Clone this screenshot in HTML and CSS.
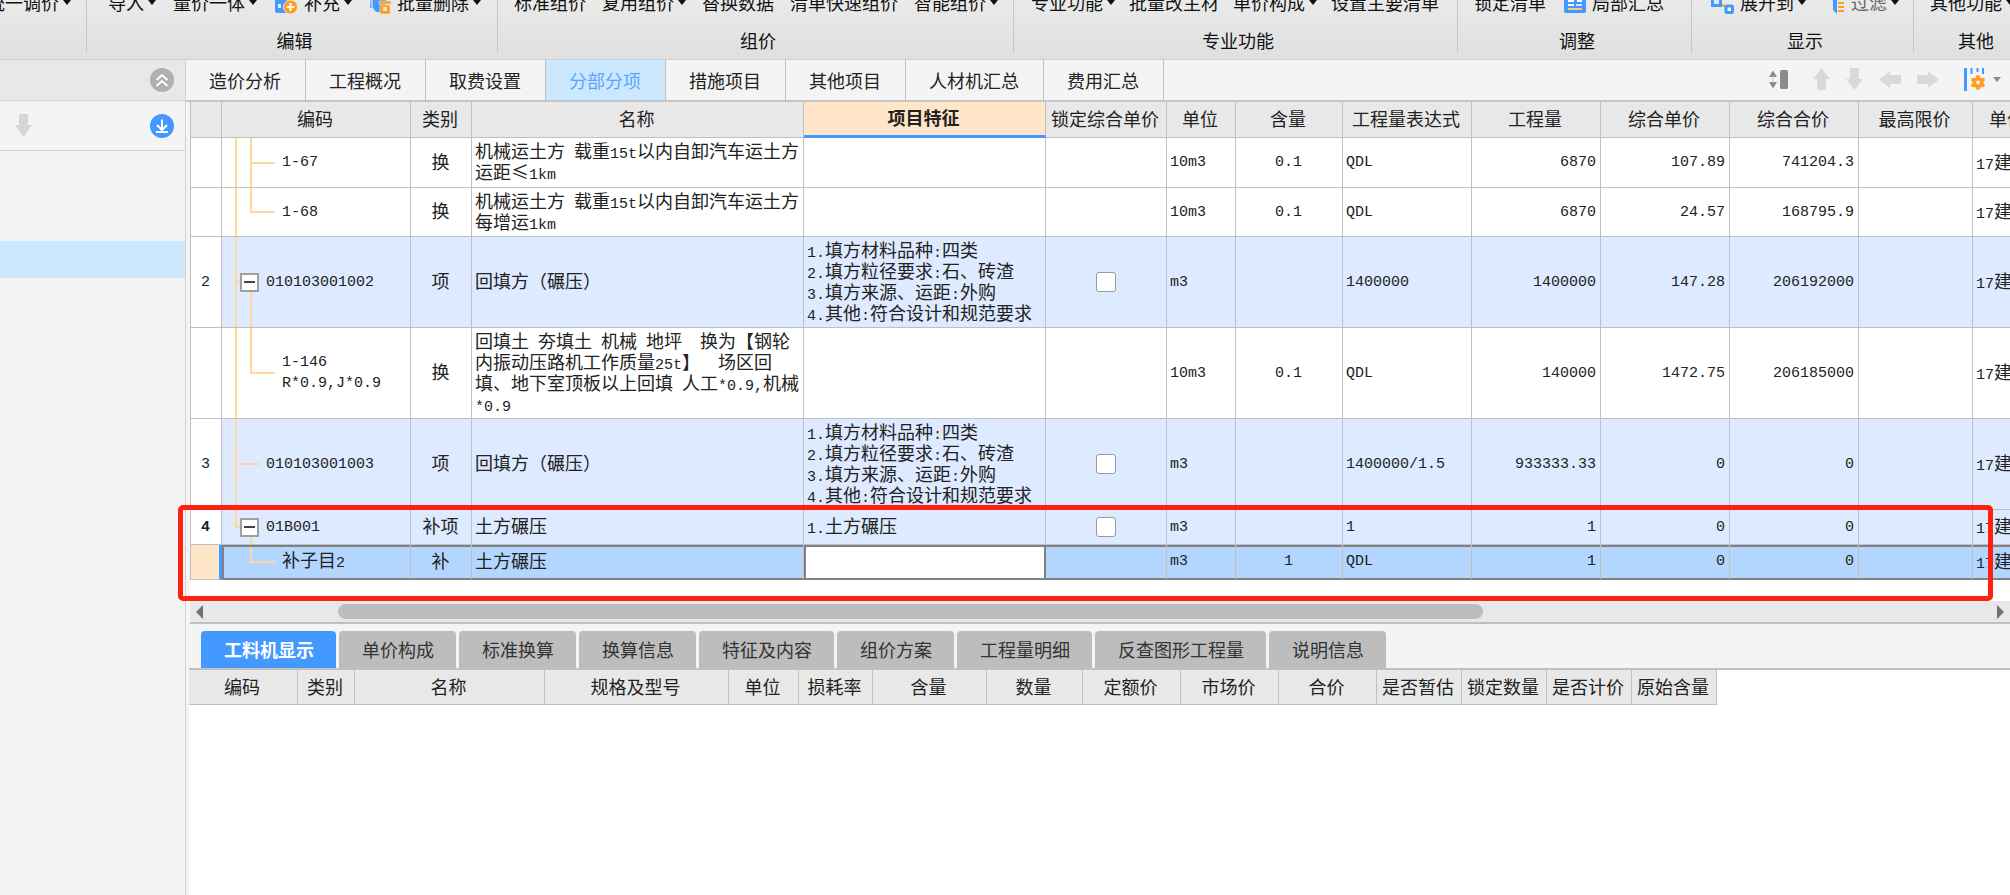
FILE: index.html
```html
<!DOCTYPE html>
<html lang="zh-CN">
<head>
<meta charset="utf-8">
<title>分部分项</title>
<link rel="stylesheet" href="styles.css">
</head>
<body>
<div class="app">
  <header class="ribbon">
    <section class="group g-price">
      <div class="tools"><button type="button" class="tool drop">统一调价</button></div>
      <div class="label"></div>
    </section>
    <section class="group g-edit">
      <div class="tools">
        <button type="button" class="tool drop">导入</button>
        <button type="button" class="tool drop">量价一体</button>
        <button type="button" class="tool drop"><svg width="24" height="24" viewBox="0 0 24 24"><rect x="1" y="0" width="17" height="23" rx="2" fill="#4399ff"/><path d="M4 5h4v4H4zM11 5h4v4h-4zM4 14h3v4H4z" fill="#e6f1ff"/><circle cx="16.500" cy="17" r="7" fill="#ff9c1c" stroke="#e5e5e5"/><path d="M16.500 13v8M12.500 17h8" stroke="#fff" stroke-width="2"/></svg>补充</button>
        <button type="button" class="tool drop"><svg width="22" height="24" viewBox="0 0 22 24"><path d="M1 2h16v20H7l-3-4H1z" fill="#4399ff"/><path d="M0 2h4v16H2z" fill="#9dcaff"/><path d="M10 11h12v3H10zM11 15h10v9H11z" fill="#ff9c1c" stroke="#e5e5e5" stroke-width=".6"/><path d="M14 17h4v4h-4z" fill="#ffe3bd"/></svg>批量删除</button>
      </div>
      <div class="label">编辑</div>
    </section>
    <section class="group g-compose">
      <div class="tools">
        <button type="button" class="tool">标准组价</button>
        <button type="button" class="tool drop">复用组价</button>
        <button type="button" class="tool">替换数据</button>
        <button type="button" class="tool">清单快速组价</button>
        <button type="button" class="tool drop">智能组价</button>
      </div>
      <div class="label">组价</div>
    </section>
    <section class="group g-pro">
      <div class="tools">
        <button type="button" class="tool drop">专业功能</button>
        <button type="button" class="tool">批量改主材</button>
        <button type="button" class="tool drop">单价构成</button>
        <button type="button" class="tool">设置主要清单</button>
      </div>
      <div class="label">专业功能</div>
    </section>
    <section class="group g-adjust">
      <div class="tools">
        <button type="button" class="tool">锁定清单</button>
        <button type="button" class="tool"><svg width="22" height="24" viewBox="0 0 22 24"><rect x="0" y="0" width="22" height="23" rx="2" fill="#4399ff"/><path d="M4 11h6M13 11h5M4 15h6" stroke="#fff" stroke-width="2"/><path d="M4 19h14" stroke="#ffc680" stroke-width="2"/><path d="M12 15h6" stroke="#fff" stroke-width="1.500"/></svg>局部汇总</button>
      </div>
      <div class="label">调整</div>
    </section>
    <section class="group g-show">
      <div class="tools">
        <button type="button" class="tool drop"><svg width="24" height="24" viewBox="0 0 24 24"><path d="M2.500 6.500h8v9h-8z" fill="#dcebff" stroke="#4399ff" stroke-width="3"/><path d="M12 14.500l3 2" stroke="#ff9c1c" stroke-width="2"/><rect x="16" y="16" width="6.500" height="6.500" rx="1" fill="#fff" stroke="#4399ff" stroke-width="3"/></svg>展开到</button>
        <button type="button" class="tool drop muted"><svg width="15" height="24" viewBox="0 0 15 24"><path d="M0 6h7v18l-4-4v-9z" fill="#4399ff"/><path d="M8 9h6M8 13h6M8 17h6M8 21h6" stroke="#ff9c1c" stroke-width="2"/></svg>过滤</button>
      </div>
      <div class="label">显示</div>
    </section>
    <section class="group g-other">
      <div class="tools"><button type="button" class="tool drop">其他功能</button></div>
      <div class="label">其他</div>
    </section>
  </header>

  <div class="body">
    <aside class="side">
      <div class="side-head">
        <button type="button" class="round grey" aria-label="收起"><svg width="24" height="24" viewBox="0 0 24 24" fill="none" stroke="#fff" stroke-width="2"><path d="M6.500 12l5.500-5 5.500 5M6.500 18l5.500-5 5.500 5"/></svg></button>
      </div>
      <div class="side-tools">
        <button type="button" class="plain" aria-label="下移"><svg width="17" height="23" viewBox="0 0 17 23"><path d="M4 0h9v11h4L8.500 23 0 11h4z" fill="#d6d6d6"/></svg></button>
        <button type="button" class="round blue" aria-label="导入"><svg width="24" height="24" viewBox="0 0 24 24" fill="none" stroke="#fff" stroke-width="2"><path d="M12 5.500v10M7 11l5 5 5-5M6 18h12"/></svg></button>
      </div>
      <div class="side-list"><div class="side-item"></div></div>
    </aside>

    <main class="main">
      <div class="tabbar">
        <nav class="tabs">
          <button type="button" class="tab">造价分析</button><button type="button" class="tab">工程概况</button><button type="button" class="tab">取费设置</button><button type="button" class="tab on">分部分项</button><button type="button" class="tab">措施项目</button><button type="button" class="tab">其他项目</button><button type="button" class="tab">人材机汇总</button><button type="button" class="tab">费用汇总</button>
        </nav>
        <div class="actions">
          <button type="button" class="plain" aria-label="行高"><svg width="19" height="19" viewBox="0 0 19 19"><path d="M0 7l4-6.500L8 7zM0 12l4 6.500L8 12z" fill="#8a8a8a"/><path d="M4 6v7" stroke="#c4c4c4"/><rect x="11" y="0" width="8" height="19" rx="1.500" fill="#8a8a8a"/></svg></button>
          <div class="arrows">
            <button type="button" class="plain" aria-label="上移"><svg width="17" height="22" viewBox="0 0 17 22"><path d="M4 22h9V11h4L8.500 0 0 11h4z" fill="#d9d9d9"/></svg></button>
            <button type="button" class="plain" aria-label="下移"><svg width="17" height="22" viewBox="0 0 17 22"><path d="M4 0h9v11h4L8.500 22 0 11h4z" fill="#d9d9d9"/></svg></button>
            <button type="button" class="plain" aria-label="升级"><svg width="22" height="17" viewBox="0 0 22 17"><path d="M22 4v9H11v4L0 8.500 11 0v4z" fill="#d9d9d9"/></svg></button>
            <button type="button" class="plain" aria-label="降级"><svg width="22" height="17" viewBox="0 0 22 17"><path d="M0 4v9h11v4l11-8.500L11 0v4z" fill="#d9d9d9"/></svg></button>
          </div>
          <button type="button" class="plain setting" aria-label="列设置"><svg width="21" height="23" viewBox="0 0 21 23"><path d="M1.500 0v23" stroke="#4399ff" stroke-width="3"/><path d="M7.500 0v6M13.500 0v4M19 0v6" stroke="#4399ff" stroke-width="2"/><g fill="#ff9c1c"><circle cx="14" cy="14.500" r="5.500"/><circle cx="14" cy="9" r="2"/><circle cx="14" cy="20" r="2"/><circle cx="9.200" cy="11.700" r="2"/><circle cx="18.800" cy="11.700" r="2"/><circle cx="9.200" cy="17.300" r="2"/><circle cx="18.800" cy="17.300" r="2"/></g><circle cx="14" cy="14.500" r="2" fill="#f4f4f4"/></svg><svg width="8" height="5" viewBox="0 0 8 5"><path d="M0 0h8L4 5z" fill="#8a8a8a"/></svg></button>
        </div>
      </div>

      <div class="grid-pane">
        <div class="grid-view">
          <table class="grid">
            <colgroup><col class="w32"><col class="w189"><col class="w61"><col class="w332"><col class="w242"><col class="w121"><col class="w69"><col class="w107"><col class="w129"><col class="w129"><col class="w129"><col class="w129"><col class="w114"><col class="w142"></colgroup>
            <thead>
              <tr><th></th><th>编码</th><th>类别</th><th>名称</th><th class="current">项目特征</th><th>锁定综合单价</th><th>单位</th><th>含量</th><th>工程量表达式</th><th>工程量</th><th>综合单价</th><th>综合合价</th><th>最高限价</th><th class="edge">单价</th></tr>
            </thead>
            <tbody>
              <tr class="h50"><td class="no"></td><td class="code sub t-mid">1-67</td><td class="kind">换</td><td>机械运土方<span class="n"> </span>载重<span class="n">15t</span>以内自卸汽车运土方<br>运距≤<span class="n">1km</span></td><td></td><td></td><td class="txt">10m3</td><td class="mid">0.1</td><td class="txt">QDL</td><td class="num">6870</td><td class="num">107.89</td><td class="num">741204.3</td><td></td><td><span class="n">17</span>建</td></tr>
              <tr class="h49"><td class="no"></td><td class="code sub t-end">1-68</td><td class="kind">换</td><td>机械运土方<span class="n"> </span>载重<span class="n">15t</span>以内自卸汽车运土方<br>每增运<span class="n">1km</span></td><td></td><td></td><td class="txt">10m3</td><td class="mid">0.1</td><td class="txt">QDL</td><td class="num">6870</td><td class="num">24.57</td><td class="num">168795.9</td><td></td><td><span class="n">17</span>建</td></tr>
              <tr class="h91 item"><td class="no">2</td><td class="code t-parent"><div class="node"><button type="button" class="fold" aria-label="折叠"></button>010103001002</div></td><td class="kind">项</td><td>回填方（碾压）</td><td><span class="n">1.</span>填方材料品种<span class="n">:</span>四类<br><span class="n">2.</span>填方粒径要求<span class="n">:</span>石、砖渣<br><span class="n">3.</span>填方来源、运距<span class="n">:</span>外购<br><span class="n">4.</span>其他<span class="n">:</span>符合设计和规范要求</td><td class="check"><input type="checkbox" aria-label="锁定综合单价"></td><td class="txt">m3</td><td></td><td class="txt">1400000</td><td class="num">1400000</td><td class="num">147.28</td><td class="num">206192000</td><td></td><td><span class="n">17</span>建</td></tr>
              <tr class="h91"><td class="no"></td><td class="code sub t-end">1-146<br>R*0.9,J*0.9</td><td class="kind">换</td><td>回填土<span class="n"> </span>夯填土<span class="n"> </span>机械<span class="n"> </span>地坪<span class="n">&nbsp; </span>换为【钢轮<br>内振动压路机工作质量<span class="n">25t</span>】<span class="n">&nbsp; </span>场区回<br>填、地下室顶板以上回填<span class="n"> </span>人工<span class="n">*0.9,</span>机械<br><span class="n">*0.9</span></td><td></td><td></td><td class="txt">10m3</td><td class="mid">0.1</td><td class="txt">QDL</td><td class="num">140000</td><td class="num">1472.75</td><td class="num">206185000</td><td></td><td><span class="n">17</span>建</td></tr>
              <tr class="h91 item"><td class="no">3</td><td class="code t-leaf">010103001003</td><td class="kind">项</td><td>回填方（碾压）</td><td><span class="n">1.</span>填方材料品种<span class="n">:</span>四类<br><span class="n">2.</span>填方粒径要求<span class="n">:</span>石、砖渣<br><span class="n">3.</span>填方来源、运距<span class="n">:</span>外购<br><span class="n">4.</span>其他<span class="n">:</span>符合设计和规范要求</td><td class="check"><input type="checkbox" aria-label="锁定综合单价"></td><td class="txt">m3</td><td></td><td class="txt">1400000/1.5</td><td class="num">933333.33</td><td class="num">0</td><td class="num">0</td><td></td><td><span class="n">17</span>建</td></tr>
              <tr class="h35 item"><td class="no strong">4</td><td class="code t-last"><div class="node"><button type="button" class="fold" aria-label="折叠"></button>01B001</div></td><td class="kind">补项</td><td>土方碾压</td><td><span class="n">1.</span>土方碾压</td><td class="check"><input type="checkbox" aria-label="锁定综合单价"></td><td class="txt">m3</td><td></td><td class="txt">1</td><td class="num">1</td><td class="num">0</td><td class="num">0</td><td></td><td><span class="n">17</span>建</td></tr>
              <tr class="h35 picked"><td class="no"></td><td class="code sub t-child"><span class="cjk">补子目</span>2</td><td class="kind">补</td><td>土方碾压</td><td class="editing"><input type="text" aria-label="项目特征"></td><td></td><td class="txt">m3</td><td class="mid">1</td><td class="txt">QDL</td><td class="num">1</td><td class="num">0</td><td class="num">0</td><td></td><td><span class="n">17</span>建</td></tr>
            </tbody>
          </table>
        </div>
        <div class="hscroll">
          <svg width="7" height="14" viewBox="0 0 7 14"><path d="M7 0v14L0 7z" fill="#707078"/></svg>
          <div class="track"><div class="thumb"></div></div>
          <svg width="7" height="14" viewBox="0 0 7 14"><path d="M0 0v14l7-7z" fill="#707078"/></svg>
        </div>
        <div class="mark"></div>
      </div>

      <div class="subtabs">
        <button type="button" class="subtab on">工料机显示</button><button type="button" class="subtab">单价构成</button><button type="button" class="subtab">标准换算</button><button type="button" class="subtab">换算信息</button><button type="button" class="subtab">特征及内容</button><button type="button" class="subtab">组价方案</button><button type="button" class="subtab">工程量明细</button><button type="button" class="subtab">反查图形工程量</button><button type="button" class="subtab">说明信息</button>
      </div>
      <div class="detail">
        <table class="parts">
          <colgroup><col class="w109"><col class="w57"><col class="w190"><col class="w184"><col class="w70"><col class="w74"><col class="w114"><col class="w96"><col class="w98"><col class="w98"><col class="w98"><col class="w85"><col class="w85"><col class="w85"><col class="w85"></colgroup>
          <thead><tr><th>编码</th><th>类别</th><th>名称</th><th>规格及型号</th><th>单位</th><th>损耗率</th><th>含量</th><th>数量</th><th>定额价</th><th>市场价</th><th>合价</th><th>是否暂估</th><th>锁定数量</th><th>是否计价</th><th>原始含量</th></tr></thead>
        </table>
      </div>
    </main>
  </div>
</div>
</body>
</html>
```
FILE: styles.css
```css
:root {
  --line: #c0c0c0;
  --blue: #4399ff;
  --tree: #ffd8a0;
  --cjk: "Noto Sans CJK SC", sans-serif;
  --mono: "Liberation Mono", "Noto Sans CJK SC", monospace;
}

* { box-sizing: border-box; }

body {
  margin: 0;
  font: 18px/21px var(--cjk);
  color: #222;
  background: #fff;
  overflow: hidden;
}

button {
  margin: 0;
  padding: 0;
  border: 0;
  background: none;
  font: inherit;
  color: inherit;
  white-space: nowrap;
}

svg { display: block; flex: none; }

.app { display: flex; flex-direction: column; height: 100vh; }

/* Ribbon */
.ribbon {
  display: flex;
  flex: none;
  overflow: hidden;
  background: linear-gradient(#eaeaea, #dfdfdf);
  border-bottom: 1px solid #d0d0d0;
  color: #111;
}
.group {
  position: relative;
  flex: none;
  padding-bottom: 7px;
}
.group:not(:last-child)::after {
  content: "";
  position: absolute;
  top: 0;
  right: 0;
  bottom: 6px;
  border-right: 1px solid #c6c6c6;
}
.tools { display: flex; align-items: center; height: 32px; margin-top: -14px; }
.label { height: 34px; padding-left: 4px; line-height: 44px; text-align: center; }
.tool { display: flex; align-items: center; gap: 6px; }
.drop::after {
  content: "";
  margin-left: -2px;
  border: 4px solid transparent;
  border-top: 5px solid #111;
  border-bottom: 0;
}
.muted { color: #666; }
.g-price { width: 87px; }
.g-price .tools { margin-left: -13px; }
.g-edit { width: 411px; }
.g-edit .tools { padding-left: 21px; gap: 17px; }
.g-compose { width: 516px; }
.g-compose .tools { padding-left: 16px; gap: 16px; }
.g-pro { width: 444px; }
.g-pro .tools { padding-left: 17px; gap: 14px; }
.g-adjust { width: 234px; }
.g-adjust .tools { padding-left: 16px; gap: 18px; }
.g-show { width: 222px; }
.g-show .tools { padding-left: 18px; gap: 24px; }
.g-other { width: 120px; }
.g-other .tools { padding-left: 16px; }

/* Left panel */
.body { display: flex; flex: 1; min-height: 0; }
.side {
  flex: none;
  width: 186px;
  background: #f4f4f4;
  border-right: 1px solid #d2d2d2;
}
.side-head, .side-tools {
  display: flex;
  align-items: center;
  padding: 0 11px 0 15px;
  border-bottom: 1px solid #d2d2d2;
}
.side-head { justify-content: flex-end; height: 41px; background: #e8e8e8; }
.side-tools { justify-content: space-between; height: 50px; }
.round { border-radius: 50%; }
.grey { background: #b0b0b0; }
.blue { background: var(--blue); }
.side-list { padding-top: 90px; }
.side-item { height: 37px; background: #cce8ff; }

/* Main area */
.main { display: flex; flex: 1; flex-direction: column; min-width: 0; background: #f4f4f4; }
.tabbar {
  display: flex;
  justify-content: space-between;
  flex: none;
  height: 42px;
  border-bottom: 2px solid #c6c6c6;
}
.tabs { display: flex; }
.tab { padding: 1px 24px 0 23px; border-right: 1px solid var(--line); }
.tab.on { padding-top: 0; background: #cce8ff; color: #5aa5ff; }
.actions { display: flex; align-items: center; gap: 25px; padding: 0 9px 2px 0; }
.arrows { display: flex; align-items: center; gap: 16px; }
.setting { display: flex; align-items: center; gap: 8px; }

/* Grid */
.grid-pane {
  position: relative;
  flex: none;
  margin-left: 4px;
  border-bottom: 2px solid #bfbfbf;
  background: #fff;
}
.grid-view { overflow: hidden; padding-bottom: 21px; }
table { border-collapse: separate; border-spacing: 0; table-layout: fixed; }
.grid { width: 1925px; }
th {
  height: 36px;
  padding: 0 2px 2px 0;
  background: #e8e8e8;
  border: solid var(--line);
  border-width: 0 1px 1px 0;
  font-weight: 400;
  white-space: nowrap;
}
th.current { background: #ffe6c8; border-bottom: 3px solid var(--blue); font-weight: 700; }
th.edge { padding-left: 16px; text-align: left; }
td {
  padding: 0 4px 3px 3px;
  border: solid var(--line);
  border-width: 0 1px 1px 0;
  white-space: nowrap;
  vertical-align: middle;
}
.grid th:first-child, .grid td:first-child { border-left: 1px solid var(--line); }
.n, .no, .code, .txt, .mid, .num { font-family: var(--mono); font-size: 15px; }
.no, .code, .txt, .mid, .num, .check { padding-bottom: 0; }
.n { line-height: 0; white-space: pre; }
.cjk { font: 18px/1 var(--cjk); }
.no, .kind, .mid, .check { text-align: center; }
.num { text-align: right; }
.strong { font-weight: 700; }
.item td:not(.no) { background-color: #deeaff; }

.code { padding-left: 44px; background-repeat: no-repeat; }
.code.sub { padding-left: 60px; }
.node { display: flex; align-items: center; gap: 7px; margin-left: -26px; }
.fold {
  display: grid;
  place-items: center;
  width: 19px;
  height: 19px;
  border: 2px solid #a0a0a0;
  background: #fff;
}
.fold::before { content: ""; width: 11px; height: 2px; background: #444; }
.t-mid, .t-end, .t-parent, .t-leaf, .t-last, .t-child {
  background-image: linear-gradient(var(--tree), var(--tree)), linear-gradient(var(--tree), var(--tree)), linear-gradient(var(--tree), var(--tree));
}
.t-mid { background-position: 13px 0, 28px 0, 28px 50%; background-size: 2px 100%, 2px 100%, 25px 2px; }
.t-end { background-position: 13px 0, 28px 0, 28px 50%; background-size: 2px 100%, 2px 50%, 25px 2px; }
.t-parent { background-position: 13px 0, 28px 100%, 13px 50%; background-size: 2px 100%, 2px 50%, 8px 2px; }
.t-leaf { background-position: 13px 0, 13px 0, 13px 50%; background-size: 2px 100%, 0 0, 25px 2px; }
.t-last { background-position: 13px 0, 28px 100%, 13px 50%; background-size: 2px 50%, 2px 50%, 8px 2px; }
.t-child { background-position: 0 0, 28px 0, 28px 50%; background-size: 0 0, 2px 50%, 25px 2px; }

.check input {
  appearance: none;
  display: block;
  width: 20px;
  height: 20px;
  margin: 0 auto;
  border: 1px solid #999;
  border-radius: 3px;
  background: #fff;
}
.picked td { background-color: #b3d6ff; border-bottom: 2px solid #808080; box-shadow: inset 0 2px #808080; }
.picked .no {
  background-color: #ffe6c8;
  border-right: 3px solid var(--blue);
  border-bottom: 1px solid var(--line);
  box-shadow: none;
}
.picked .code { box-shadow: inset 2px 2px #808080; }
.picked .editing { padding: 2px 0 0; border-right: 2px solid #808080; box-shadow: inset 2px 2px #808080; background: #fff; }
.editing input {
  display: block;
  width: calc(100% - 2px);
  height: 30px;
  margin-left: 2px;
  padding: 0 4px;
  border: 0;
  outline: 0;
  background: #fff;
  font: inherit;
}

.h50 { height: 50px; }
.h49 { height: 49px; }
.h91 { height: 91px; }
.h35 { height: 35px; }

.w32 { width: 32px; } .w57 { width: 57px; } .w61 { width: 61px; } .w69 { width: 69px; }
.w70 { width: 70px; } .w74 { width: 74px; } .w85 { width: 85px; } .w96 { width: 96px; }
.w98 { width: 98px; } .w107 { width: 107px; } .w109 { width: 109px; }
.w114 { width: 114px; } .w121 { width: 121px; } .w129 { width: 129px; } .w142 { width: 142px; }
.w184 { width: 184px; } .w189 { width: 189px; } .w190 { width: 190px; } .w242 { width: 242px; }
.w332 { width: 332px; }

.hscroll {
  display: flex;
  align-items: center;
  height: 21px;
  padding: 0 6px;
  background: #e8e8e8;
}
.track { flex: 1; padding-left: 135px; }
.thumb { width: 69%; height: 15px; border-radius: 8px; background: #bdbdbd; }

/* Annotation over the last two rows */
.mark {
  position: absolute;
  top: 403px;
  right: 17px;
  bottom: 21px;
  left: -12px;
  border: 5px solid #ff2010;
  border-radius: 5px;
  pointer-events: none;
}

/* Detail panel */
.subtabs { display: flex; flex: none; gap: 3px; padding: 7px 15px 0; }
.subtab {
  height: 37px;
  padding: 0 22px 0 23px;
  border-radius: 4px 4px 0 0;
  background: #bdbdbd;
  color: #333;
}
.subtab.on { background: var(--blue); color: #fff; font-weight: 700; }
.detail {
  flex: 1;
  min-height: 0;
  margin-left: 3px;
  overflow: hidden;
  border-top: 2px solid var(--line);
  background: #fff;
}
.parts { width: 1528px; }
.parts th { height: 35px; }
```
